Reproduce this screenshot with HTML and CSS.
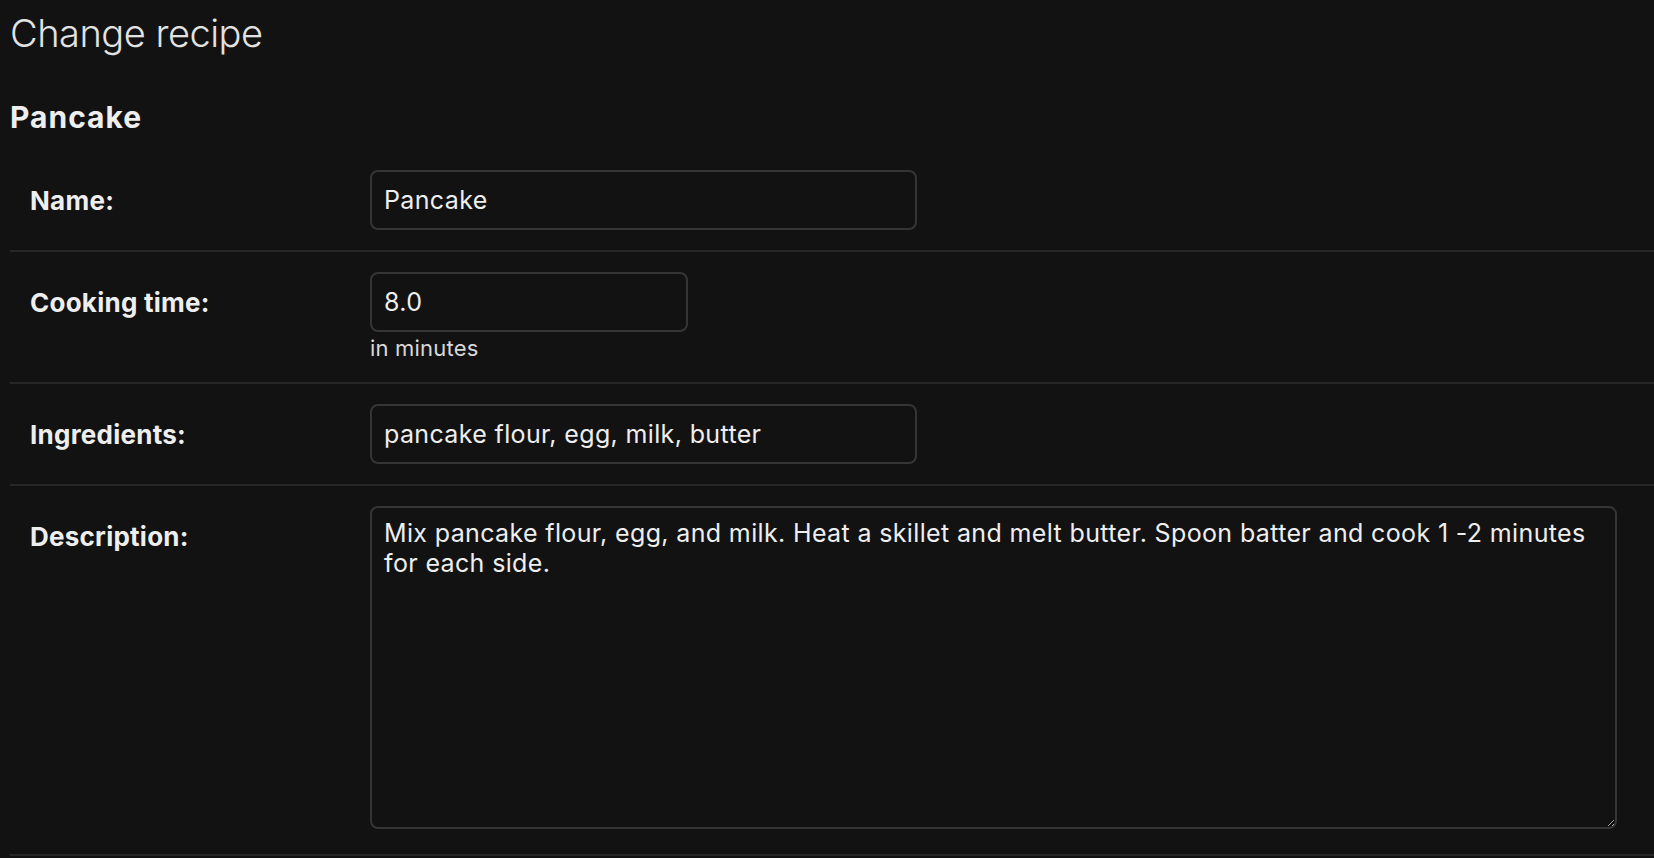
FILE: index.html
```html
<!DOCTYPE html>
<html lang="en">
<head>
<meta charset="utf-8">
<title>Change recipe</title>
<link rel="stylesheet" href="styles.css">
</head>
<body>
<div class="content">
  <h1 class="page-title">Change recipe</h1>
  <h2 class="object-title">Pancake</h2>
  <form class="form">
    <div class="form-row">
      <label class="field-label" for="id_name">Name:</label>
      <div class="field">
        <input class="text-input wide" id="id_name" type="text" value="Pancake">
      </div>
    </div>
    <div class="form-row">
      <label class="field-label" for="id_time">Cooking time:</label>
      <div class="field">
        <input class="text-input narrow" id="id_time" type="text" value="8.0">
        <div class="help">in minutes</div>
      </div>
    </div>
    <div class="form-row">
      <label class="field-label" for="id_ing">Ingredients:</label>
      <div class="field">
        <input class="text-input wide" id="id_ing" type="text" value="pancake flour, egg, milk, butter">
      </div>
    </div>
    <div class="form-row last">
      <label class="field-label" for="id_desc">Description:</label>
      <div class="field">
        <textarea class="text-area" id="id_desc">Mix pancake flour, egg, and milk. Heat a skillet and melt butter. Spoon batter and cook 1 -2 minutes for each side.</textarea>
      </div>
    </div>
  </form>
</div>
</body>
</html>
```
FILE: styles.css
```css
html, body {
  margin: 0;
  padding: 0;
  background: #121212;
  color: #eeeeee;
  font-family: Inter, "Noto Sans", "Liberation Sans", sans-serif;
  color-scheme: dark;
}

.content {
  padding-left: 10px;
  overflow: hidden;
  height: 858px;
}

.page-title {
  margin: 10px 0 0;
  font-size: 38px;
  line-height: 46px;
  font-weight: 300;
  letter-spacing: -0.5px;
  color: #e2e2e2;
}

.object-title {
  margin: 44px 0 16px;
  font-size: 30px;
  line-height: 34px;
  font-weight: 700;
  letter-spacing: 1px;
  color: #eeeeee;
}

.form-row {
  display: flex;
  align-items: flex-start;
  padding: 20px 0 20px 20px;
  border-bottom: 2px solid #272727;
}

.form-row.last {
  padding-bottom: 25px;
}

.field-label {
  width: 340px;
  flex: none;
  padding-top: 16px;
  font-size: 26px;
  line-height: 30px;
  font-weight: 700;
  letter-spacing: 0.25px;
  color: #eeeeee;
}

.field {
  display: flex;
  flex-direction: column;
}

.text-input,
.text-area {
  box-sizing: border-box;
  margin: 0;
  background: #121212;
  color: #eeeeee;
  border: 2px solid #353535;
  border-radius: 8px;
  font-family: Inter, "Noto Sans", "Liberation Sans", sans-serif;
  font-size: 25px;
  letter-spacing: 0.36px;
  outline: none;
}

.text-input {
  height: 60px;
  padding: 0 12px;
}

.text-input.wide {
  width: 547px;
}

.text-input.narrow {
  width: 318px;
}

.help {
  margin-top: 2px;
  font-size: 22px;
  line-height: 28px;
  letter-spacing: 0.2px;
  color: #d8d8d8;
}

.text-area {
  display: block;
  width: 1247px;
  height: 323px;
  padding: 10px 12px;
  line-height: 30px;
  resize: both;
}
```
